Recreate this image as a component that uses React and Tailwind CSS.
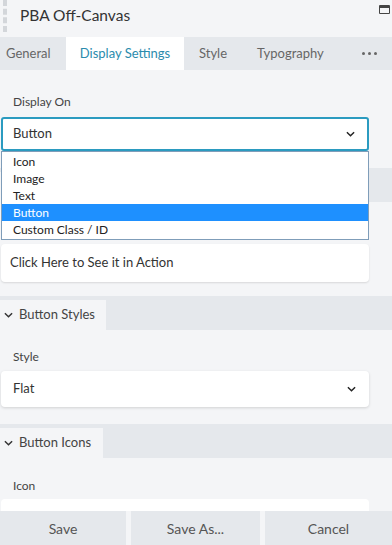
import React from "react";

function Chevron({ className = "" }) {
  return (
    <svg viewBox="0 0 10 6" className={className} fill="none" stroke="currentColor" strokeWidth="1.6">
      <path d="M1 1l4 4 4-4" />
    </svg>
  );
}

function SectionHeader({ title, tabWidth }) {
  return (
    <div className="flex h-[34px] items-end bg-[#e5e8ec]">
      <div className={`flex h-[30px] items-center gap-[6px] bg-[#f4f5f7] pl-[4px] ${tabWidth}`}>
        <Chevron className="h-[6px] w-[9px] text-[#333]" />
        {title && <span className="text-[13px] text-[#444]">{title}</span>}
      </div>
    </div>
  );
}

export default function App() {
  const options = ["Icon", "Image", "Text", "Button", "Custom Class / ID"];

  return (
    <div
      className="flex h-[545px] w-[392px] flex-col overflow-hidden bg-[#f4f5f7] text-[#333]"
      style={{ fontFamily: "Lato, 'Noto Sans', sans-serif" }}
    >
      <header className="relative flex h-[37px] items-start bg-[#f4f5f7]">
        <div className="ml-[3px] h-[32px] w-[4px] border-x-2 border-dashed border-[#d3d6da]" />
        <h1 className="ml-[13px] mt-[5px] text-[15.5px] leading-[20px] text-[#333]">PBA Off-Canvas</h1>
        <div className="absolute right-[2px] top-[5px] h-[9px] w-[11px] rounded-[1px] border border-t-[3px] border-[#444]" />
      </header>

      <nav className="flex h-[33px] items-stretch bg-[#e5e8ec] text-[13px] text-[#666]">
        <div className="flex w-[66px] items-center pl-[6px]">General</div>
        <div className="flex w-[118px] items-center justify-center bg-white text-[#2b8bad]">Display Settings</div>
        <div className="flex w-[73px] items-center pl-[15px]">Style</div>
        <div className="flex items-center">Typography</div>
        <div className="ml-auto flex items-center gap-[3px] pr-[15px]">
          <span className="h-[3px] w-[3px] rounded-full bg-[#666]" />
          <span className="h-[3px] w-[3px] rounded-full bg-[#666]" />
          <span className="h-[3px] w-[3px] rounded-full bg-[#666]" />
        </div>
      </nav>

      <main className="flex-1 overflow-hidden">
        <div className="pl-[1px] pr-[23px]">
          <label className="block pl-[12px] pt-[24px] text-[12px] leading-[16px] text-[#444]">Display On</label>
          <div className="relative mt-[7px]">
            <div className="flex h-[34px] items-center justify-between rounded-[3px] border-2 border-[#2b9bc0] bg-white pl-[10px] pr-[12px] text-[13px] text-[#333]">
              <span>Button</span>
              <Chevron className="h-[6px] w-[9px] text-[#222]" />
            </div>
            <ul className="absolute left-0 right-0 top-[34px] z-10 border border-[#7f9db9] bg-white py-[1px] text-[12px] leading-[17px] text-[#222]">
              {options.map((opt) => (
                <li
                  key={opt}
                  className={opt === "Button" ? "bg-[#1e90ff] pl-[11px] text-white" : "pl-[11px]"}
                >
                  {opt}
                </li>
              ))}
            </ul>
          </div>
        </div>

        <div className="mt-[17px]">
          <SectionHeader title="" tabWidth="w-[100px]" />
        </div>
        <div className="pl-[1px] pr-[23px]">
          <div className="h-[42px]" />
          <div className="flex h-[38px] items-center rounded-[4px] bg-white pl-[9px] text-[13px] text-[#333] shadow-[0_1px_2px_rgba(0,0,0,0.12)]">
            Click Here to See it in Action
          </div>
        </div>

        <div className="mt-[14px]">
          <SectionHeader title="Button Styles" tabWidth="w-[106px]" />
        </div>
        <div className="pl-[1px] pr-[23px]">
          <label className="block pl-[12px] pt-[19px] text-[12px] leading-[16px] text-[#444]">Style</label>
          <div className="mt-[6px] flex h-[36px] items-center justify-between rounded-[4px] bg-white pl-[12px] pr-[13px] text-[13px] text-[#333] shadow-[0_1px_3px_rgba(0,0,0,0.15)]">
            <span>Flat</span>
            <Chevron className="h-[6px] w-[9px] text-[#222]" />
          </div>
        </div>

        <div className="mt-[17px]">
          <SectionHeader title="Button Icons" tabWidth="w-[103px]" />
        </div>
        <div className="pl-[1px] pr-[23px]">
          <label className="block pl-[12px] pt-[20px] text-[12px] leading-[16px] text-[#444]">Icon</label>
          <div className="mt-[5px] h-[36px] rounded-[4px] bg-white" />
        </div>
      </main>

      <footer className="flex h-[34px] gap-[5px] text-[14px] text-[#555]">
        <button className="flex w-[126px] items-center justify-center bg-[#e5e8ec]">Save</button>
        <button className="flex w-[129px] items-center justify-center bg-[#e5e8ec]">Save As...</button>
        <button className="flex flex-1 items-center justify-center bg-[#e5e8ec]">Cancel</button>
      </footer>
    </div>
  );
}
